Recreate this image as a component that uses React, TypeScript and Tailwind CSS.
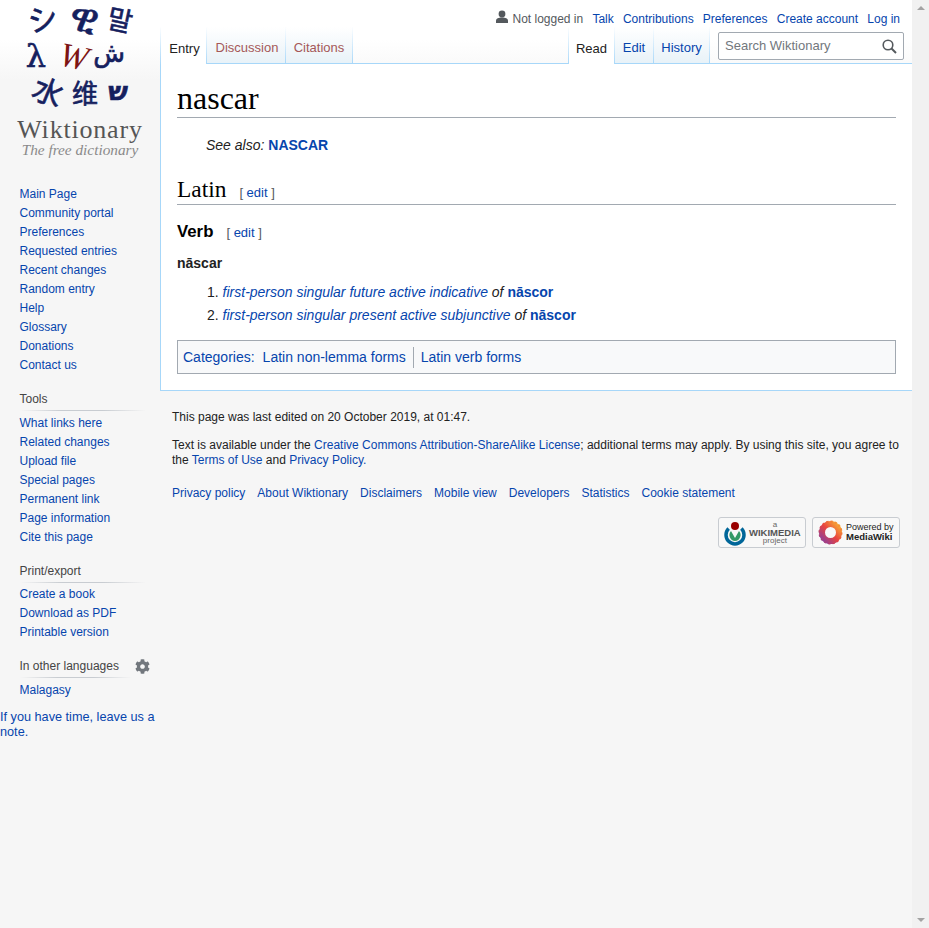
import React from 'react';
import { FaCog } from 'react-icons/fa';

const sans = "font-['Liberation_Sans',Arial,sans-serif]";
const serif = "font-['Liberation_Serif','Times_New_Roman',serif]";
const tabBg = 'bg-[linear-gradient(to_top,#e8f2f8,#ffffff)]';
const fade = '[border-image:linear-gradient(to_bottom,#ffffff,#a7d7f9)_1]';

const navMain = ['Main Page', 'Community portal', 'Preferences', 'Requested entries', 'Recent changes', 'Random entry', 'Help', 'Glossary', 'Donations', 'Contact us'];
const navTools = ['What links here', 'Related changes', 'Upload file', 'Special pages', 'Permanent link', 'Page information', 'Cite this page'];
const navPrint = ['Create a book', 'Download as PDF', 'Printable version'];
const personal = ['Talk', 'Contributions', 'Preferences', 'Create account', 'Log in'];
const footerLinks = ['Privacy policy', 'About Wiktionary', 'Disclaimers', 'Mobile view', 'Developers', 'Statistics', 'Cookie statement'];

const Logo = () => (
  <svg width="160" height="160" viewBox="0 0 160 160" className="block overflow-visible">
    <g fill="#15205e" stroke="#15205e" strokeWidth="0.6" fontFamily="'Noto Sans CJK JP','DejaVu Sans',sans-serif" textAnchor="middle">
      <text x="43" y="30" fontSize="30" transform="rotate(-12 43 20)">シ</text>
      <text x="84" y="32" fontSize="42" transform="rotate(14 84 20)">ዊ</text>
      <text x="120" y="30" fontSize="27" transform="rotate(12 120 20)">말</text>
      <text x="36" y="67" fontSize="32" fontFamily="'DejaVu Serif',serif">λ</text>
      <text x="109" y="62" fontSize="26">ش</text>
      <text x="48" y="103" fontSize="30" transform="rotate(22 48 92)">水</text>
      <text x="85" y="103" fontSize="26">维</text>
      <text x="118" y="100" fontSize="26" fontWeight="bold" fontFamily="'DejaVu Sans',sans-serif">ש</text>
    </g>
    <text x="74" y="68" fontSize="34" fontFamily="'Liberation Serif',serif" fontStyle="italic" fill="#7d1414" textAnchor="middle" transform="rotate(12 74 56)">W</text>
    <text x="80" y="138" fontSize="26" fontFamily="'Liberation Serif',serif" fill="#555" textAnchor="middle" letterSpacing="0.8">Wiktionary</text>
    <text x="80" y="155" fontSize="15.3" fontFamily="'Liberation Serif',serif" fontStyle="italic" fill="#8a8a8a" textAnchor="middle">The free dictionary</text>
  </svg>
);

const SideHeading = ({ children, width = 'w-[126px]' }: { children: React.ReactNode; width?: string }) => (
  <div className={width}>
    <div className="text-[12px] leading-[19px] text-[#444444]">{children}</div>
    <div className="mt-px h-px bg-[linear-gradient(to_right,transparent,#c8ccd1_33%,#c8ccd1_66%,transparent)]" />
  </div>
);

const SideList = ({ items }: { items: string[] }) => (
  <ul className="text-[12px] leading-[19px] text-[#0645ad]">
    {items.map(item => <li key={item}>{item}</li>)}
  </ul>
);

const Tab = ({ label, active, color = 'text-[#0645ad]', w }: { label: string; active?: boolean; color?: string; w: string }) => (
  <div className={`${w} h-[36px] flex items-center justify-center pt-[6px] border-r ${fade} text-[13px] ${active ? 'bg-white text-[#222222]' : `${tabBg} ${color}`}`}>
    {label}
  </div>
);

const WikimediaBadge = () => (
  <div className="w-[88px] h-[31px] rounded-[3px] border border-[#c8ccd1] bg-[#f8f8f8] flex items-center pl-[2px]">
    <svg width="28" height="28" viewBox="0 0 28 28" className="shrink-0">
      <circle cx="14" cy="7" r="4" fill="#990000" />
      <path d="M7.6 9.6 A9 9 0 1 0 20.4 9.6" fill="none" stroke="#006699" strokeWidth="3.5" />
      <path d="M10 12 L14 19 L18 12 A6 6 0 0 1 14 22 A6 6 0 0 1 10 12 Z" fill="#339966" />
    </svg>
    <div className="flex flex-col items-center text-[#666666] leading-[8px] text-[8px]">
      <span>a</span>
      <span className="font-bold text-[9.5px] text-[#555555]">WIKIMEDIA</span>
      <span>project</span>
    </div>
  </div>
);

const MediaWikiBadge = () => (
  <div className="w-[88px] h-[31px] rounded-[3px] border border-[#c8ccd1] bg-[#f8f8f8] flex items-center pl-[5px] gap-[3px]">
    <svg width="25" height="25" viewBox="0 0 25 25" className="shrink-0">
      <defs>
        <linearGradient id="mwg" x1="0" y1="1" x2="1" y2="0">
          <stop offset="0" stopColor="#8a3f9e" />
          <stop offset="0.5" stopColor="#e9433f" />
          <stop offset="1" stopColor="#f9b233" />
        </linearGradient>
      </defs>
      <circle cx="12.5" cy="12.5" r="8.5" fill="none" stroke="url(#mwg)" strokeWidth="6" />
      <circle cx="12.5" cy="12.5" r="11" fill="none" stroke="url(#mwg)" strokeWidth="2" strokeDasharray="2.2 2.1" />
    </svg>
    <div className="-mt-px flex flex-col text-[9px] leading-[10px] text-[#222222]">
      <span>Powered by</span>
      <span className="text-[9.5px] font-bold">MediaWiki</span>
    </div>
  </div>
);

export default function App() {
  return (
    <div className={`${sans} w-[929px] h-[928px] overflow-hidden flex`}>
      <div className="w-[912px] h-[928px] flex bg-[#f6f6f6] bg-[linear-gradient(#ffffff_50%,#f6f6f6_100%)] bg-no-repeat bg-[length:100%_80px]">
        {/* sidebar */}
        <aside className="w-[160px] shrink-0">
          <Logo />
          <div className="mt-[25px] pl-[19.5px]">
            <SideList items={navMain} />
            <div className="mt-[15px]"><SideHeading>Tools</SideHeading></div>
            <div className="mt-[3px]"><SideList items={navTools} /></div>
            <div className="mt-[15px]"><SideHeading>Print/export</SideHeading></div>
            <div className="mt-[2px]"><SideList items={navPrint} /></div>
            <div className="mt-[15px] flex items-start">
              <SideHeading width="w-[112px]">In other languages</SideHeading>
              <FaCog className="ml-[3px] mt-[2px] text-[15px] text-[#72777d]" />
            </div>
            <div className="mt-[3px]"><SideList items={['Malagasy']} /></div>
          </div>
          <p className="mt-[10px] text-[12.7px] leading-[15px] text-[#0645ad]">If you have time, leave us a note.</p>
        </aside>

        {/* main column */}
        <div className="flex-1 min-w-0">
          <div className="h-[27px] pr-[12px] flex items-center justify-end text-[12px] gap-[9.2px] pt-[10px]">
            <span className="flex items-center gap-[3px] text-[#54595d]">
              <svg width="14" height="14" viewBox="0 0 14 14" className="-mt-[3px]" fill="#54595d">
                <circle cx="7" cy="4" r="3.4" />
                <path d="M1 13 V10.5 C1 8.5 3.5 7.4 7 7.4 C10.5 7.4 13 8.5 13 10.5 V13 Z" />
              </svg>
              Not logged in
            </span>
            {personal.map(item => <span key={item} className="text-[#0645ad]">{item}</span>)}
          </div>

          <div className="flex">
            <div className={`h-[37px] w-[47px] border-l border-r ${fade} bg-white flex items-center justify-center pt-[6px] pl-[2px] text-[13px] text-[#222222]`}>Entry</div>
            <div className="border-b border-[#a7d7f9]"><Tab label="Discussion" w="w-[79px] pl-[2px]" color="text-[#a55858]" /></div>
            <div className="border-b border-[#a7d7f9]"><Tab label="Citations" w="w-[67px]" color="text-[#a55858]" /></div>
            <div className="w-[215px] h-[37px] border-b border-[#a7d7f9]" />
            <div className={`h-[37px] w-[47px] border-l ${fade}`}><Tab label="Read" active w="w-[46px] !h-[37px]" /></div>
            <div className="border-b border-[#a7d7f9]"><Tab label="Edit" w="w-[39px]" /></div>
            <div className="border-b border-[#a7d7f9]"><Tab label="History" w="w-[56px]" /></div>
            <div className="flex-1 h-[37px] border-b border-[#a7d7f9] pl-[8px] pr-[8px] pt-[5px]">
              <div className="h-[28px] bg-white border border-[#a2a9b1] rounded-[2px] flex items-center justify-between pl-[6px] pr-[6px] text-[13px] text-[#72777d]">
                <span>Search Wiktionary</span>
                <svg width="15" height="15" viewBox="0 0 15 15" fill="none" stroke="#54595d" strokeWidth="1.6">
                  <circle cx="6" cy="6" r="4.8" />
                  <path d="M9.5 9.5 L14 14" strokeWidth="2" />
                </svg>
              </div>
            </div>
          </div>

          {/* content */}
          <main className="h-[327px] bg-white border-l border-b border-[#a7d7f9] pl-[16px] pr-[16px] text-[14px] text-[#222222]">
            <h1 className={`${serif} text-[32px] leading-[37px] pt-[16px] h-[54px] border-b border-[#a2a9b1] text-black`}>nascar</h1>
            <p className="mt-[18px] pl-[29px] leading-[19px] italic">See also: <b className="not-italic text-[#0645ad]">NASCAR</b></p>
            <h2 className="mt-[20px] flex items-baseline border-b border-[#a2a9b1] h-[30px]">
              <span className={`${serif} text-[23.4px] leading-[28px] text-black font-normal`}>Latin</span>
              <span className="ml-[13px] text-[13px] text-[#54595d] font-normal">[ <span className="text-[#0645ad]">edit</span> ]</span>
            </h2>
            <h3 className="mt-[16px] flex items-baseline leading-[22px]">
              <span className="text-[16.8px] font-bold text-black">Verb</span>
              <span className="ml-[13px] text-[13px] text-[#54595d] font-normal">[ <span className="text-[#0645ad]">edit</span> ]</span>
            </h3>
            <p className="mt-[9px] font-bold leading-[20px] text-[14px]">nāscar</p>
            <ol className="mt-[8px] pl-[30px] list-decimal list-inside leading-[23px]">
              <li><i><span className="text-[#0645ad]">first-person singular future active indicative</span> of</i> <b className="text-[#0645ad]">nāscor</b></li>
              <li><i><span className="text-[#0645ad]">first-person singular present active subjunctive</span> of</i> <b className="text-[#0645ad]">nāscor</b></li>
            </ol>
            <div className="mt-[13px] h-[34px] border border-[#a2a9b1] bg-[#f8f9fa] flex items-center pl-[5px] text-[#0645ad]">
              <span>Categories:</span>
              <span className="ml-[8px] pr-[7px] border-r border-[#a2a9b1]">Latin non-lemma forms</span>
              <span className="ml-[7px]">Latin verb forms</span>
            </div>
          </main>

          {/* footer */}
          <footer className="pl-[12px] pr-[12px] pt-[19px] text-[12px] leading-[15px] text-[#222222]">
            <p>This page was last edited on 20 October 2019, at 01:47.</p>
            <p className="mt-[13px]">
              Text is available under the <span className="text-[#0645ad]">Creative Commons Attribution-ShareAlike License</span>; additional terms may apply. By using this site, you agree to the <span className="text-[#0645ad]">Terms of Use</span> and <span className="text-[#0645ad]">Privacy Policy.</span>
            </p>
            <div className="mt-[18px] flex gap-[12px] text-[#0645ad]">
              {footerLinks.map(link => <span key={link}>{link}</span>)}
            </div>
            <div className="mt-[16px] flex justify-end gap-[6px]">
              <WikimediaBadge />
              <MediaWikiBadge />
            </div>
          </footer>
        </div>
      </div>

      {/* scrollbar */}
      <div className="w-[17px] h-[928px] bg-[#f1f1f1] flex flex-col items-center justify-between py-[6px]">
        <div className="w-0 h-0 border-x-[4px] border-x-transparent border-b-[4px] border-b-[#a3a3a3]" />
        <div className="w-0 h-0 border-x-[4px] border-x-transparent border-t-[4px] border-t-[#a3a3a3]" />
      </div>
    </div>
  );
}
